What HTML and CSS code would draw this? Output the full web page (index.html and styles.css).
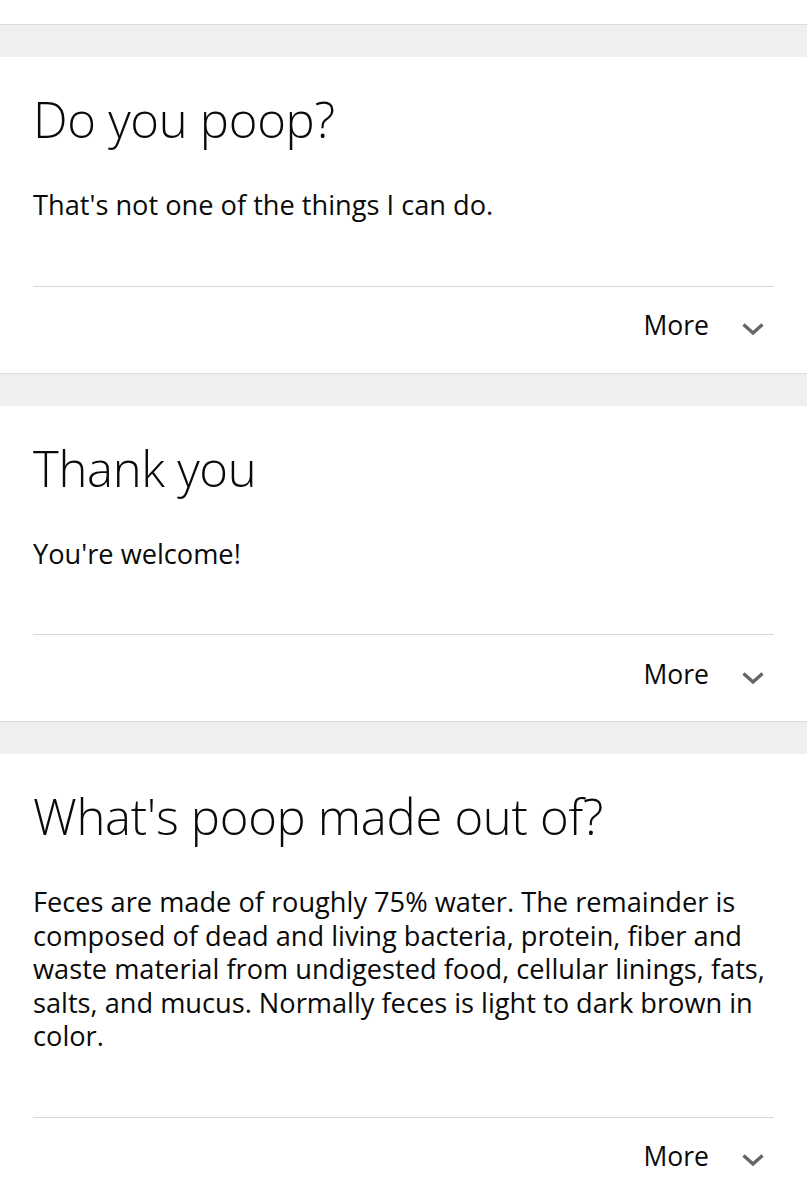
FILE: index.html
```html
<!DOCTYPE html>
<html>
<head>
<meta charset="utf-8">
<link rel="stylesheet" href="styles.css">
</head>
<body>
<div class="topbar"></div>
<div class="gap"></div>
<section class="card">
  <h2 class="title">Do you poop?</h2>
  <p class="answer">That's not one of the things I can do.</p>
  <div class="footer">
    <span class="more">More</span>
    <svg class="chev" width="22" height="14" viewBox="0 0 22 14"><path d="M1.5 2.5 L11 11 L20.5 2.5" fill="none" stroke="#666" stroke-width="3.4"/></svg>
  </div>
</section>
<div class="gap"></div>
<section class="card">
  <h2 class="title">Thank you</h2>
  <p class="answer">You're welcome!</p>
  <div class="footer">
    <span class="more">More</span>
    <svg class="chev" width="22" height="14" viewBox="0 0 22 14"><path d="M1.5 2.5 L11 11 L20.5 2.5" fill="none" stroke="#666" stroke-width="3.4"/></svg>
  </div>
</section>
<div class="gap"></div>
<section class="card">
  <h2 class="title">What's poop made out of?</h2>
  <p class="answer long">Feces are made of roughly 75% water. The remainder is<br>composed of dead and living bacteria, protein, fiber and<br>waste material from undigested food, cellular linings, fats,<br>salts, and mucus. Normally feces is light to dark brown in<br>color.</p>
  <div class="footer">
    <span class="more">More</span>
    <svg class="chev" width="22" height="14" viewBox="0 0 22 14"><path d="M1.5 2.5 L11 11 L20.5 2.5" fill="none" stroke="#666" stroke-width="3.4"/></svg>
  </div>
</section>
</body>
</html>
```
FILE: styles.css
```css
html, body {
  margin: 0;
  padding: 0;
}
body {
  background: #efefef;
  font-family: "Open Sans", "Noto Sans", sans-serif;
  color: #0a0a0a;
}
.topbar {
  height: 24px;
  background: #fff;
  border-bottom: 1px solid #dcdcdc;
}
.gap {
  height: 32px;
}
.card {
  background: #fff;
  border-bottom: 1px solid #dcdcdc;
  padding: 0 33px;
  display: flex;
  flex-direction: column;
}
.title {
  margin: 32px 0 0;
  font-weight: 300;
  font-size: 49px;
  line-height: 60px;
  letter-spacing: -0.3px;
}
.answer {
  margin: 39px -24px 0 0;
  font-size: 27.2px;
  line-height: 33.5px;
  padding-bottom: 64px;
  white-space: nowrap;
}
.footer {
  box-sizing: border-box;
  border-top: 1px solid #d8d8d8;
  height: 87px;
  padding: 0 10px 9px 0;
  display: flex;
  justify-content: flex-end;
  align-items: center;
  gap: 33px;
}
.more {
  font-size: 26.5px;
  line-height: 36px;
}
.chev {
  margin-top: 8px;
}
```
